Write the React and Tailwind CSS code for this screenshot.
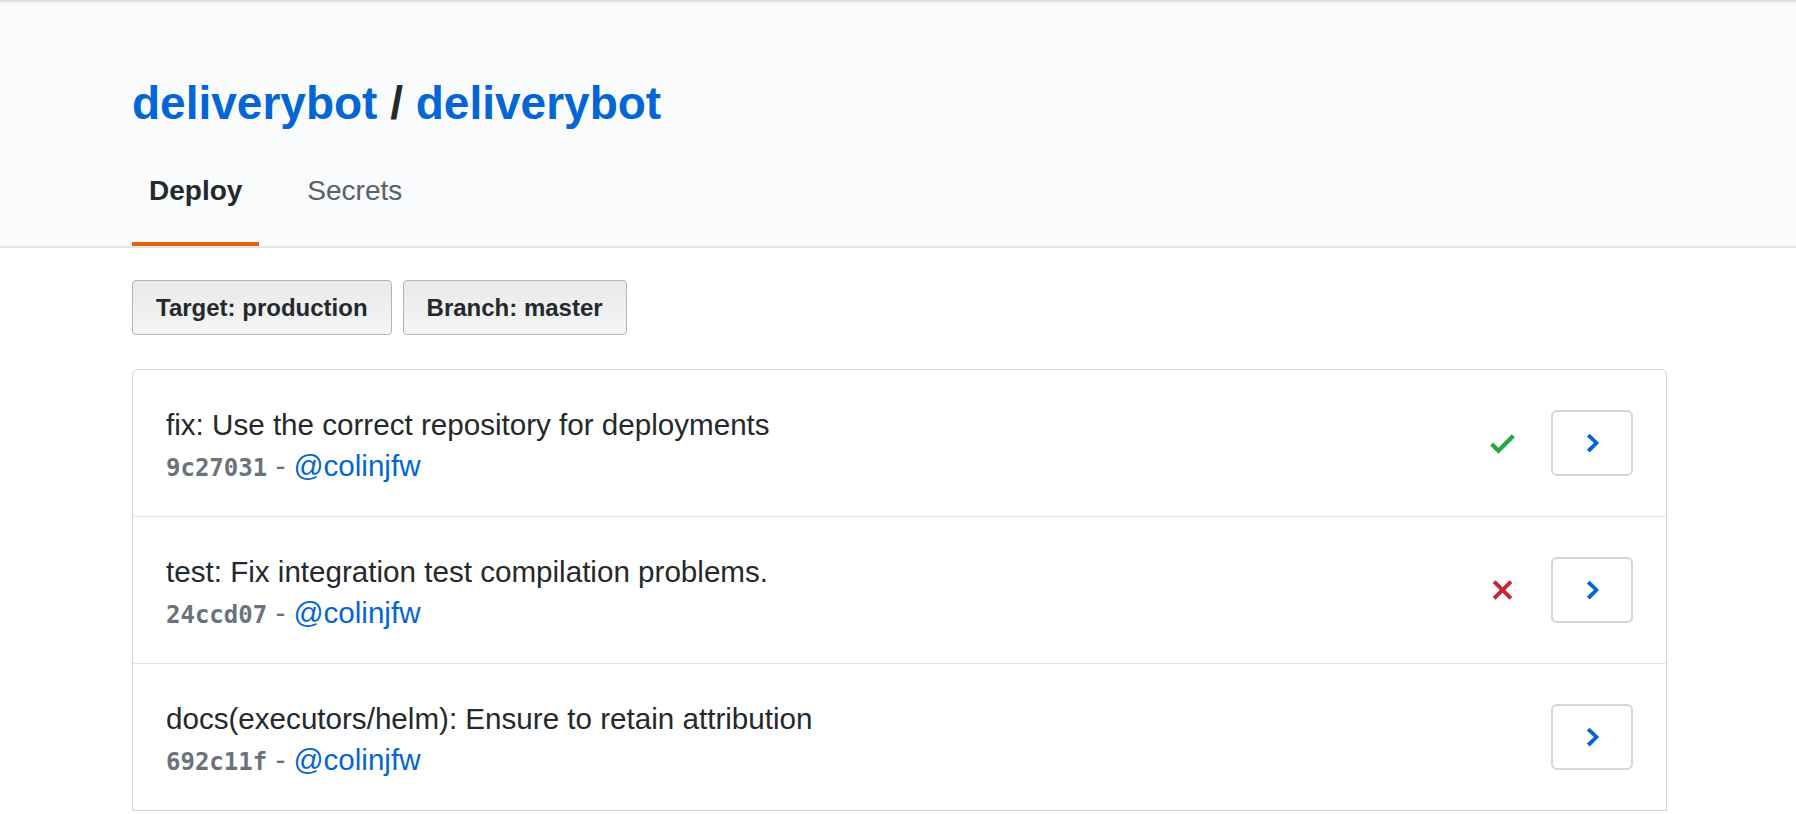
import React from "react";

const sans = { fontFamily: '"Liberation Sans", Arial, sans-serif' };

function Check() {
  return (
    <svg width="25" height="33" viewBox="0 0 12 16" className="fill-[#28a745]">
      <path d="M12 5l-8 8-4-4 1.5-1.5L4 10l6.5-6.5L12 5z" />
    </svg>
  );
}

function Cross() {
  return (
    <svg width="23" height="30" viewBox="0 0 12 16" className="fill-[#cb2431]">
      <path d="M7.48 8l3.75 3.75-1.48 1.48L6 9.48l-3.75 3.75-1.48-1.48L4.52 8 .77 4.25l1.48-1.48L6 6.52l3.75-3.75 1.48 1.48L7.48 8z" />
    </svg>
  );
}

function Chevron() {
  return (
    <svg width="15" height="30" viewBox="0 0 8 16" className="fill-[#0366d6]">
      <path d="M7.5 8l-5 5L1 11.5 4.75 8 1 4.5 2.5 3l5 5z" />
    </svg>
  );
}

const commits = [
  { msg: "fix: Use the correct repository for deployments", sha: "9c27031", status: "ok" },
  { msg: "test: Fix integration test compilation problems.", sha: "24ccd07", status: "fail" },
  { msg: "docs(executors/helm): Ensure to retain attribution", sha: "692c11f", status: null },
];

export default function App() {
  return (
    <div className="min-h-[814px] bg-white" style={sans}>
      <header className="bg-[#fafbfc] border-b-2 border-[#e1e4e8]">
        <div className="h-[3px] bg-gradient-to-b from-[#d9dadd] to-[#f4f5f7]" />
        <div className="ml-[132px] pt-[77px]">
          <h1 className="text-[46px] leading-none font-bold text-[#24292e]">
            <span className="text-[#0366d6]">deliverybot</span> /{" "}
            <span className="text-[#0366d6]">deliverybot</span>
          </h1>
          <nav className="mt-[51px] flex gap-[31px] text-[28px] leading-none">
            <div className="px-[17px] pb-[37px] border-b-4 border-[#e36209] font-bold text-[#24292e]">
              Deploy
            </div>
            <div className="px-[17px] pb-[37px] border-b-4 border-transparent text-[#586069]">
              Secrets
            </div>
          </nav>
        </div>
      </header>

      <main className="ml-[132px] w-[1535px] pt-[32px]">
        <div className="flex gap-[11px]">
          <button className="h-[55px] px-[23px] flex items-center rounded-[4px] border border-[#b4b4b4] bg-gradient-to-b from-[#e9e9e9] to-[#f5f5f5] text-[24px] font-bold text-[#24292e]">
            Target: production
          </button>
          <button className="h-[55px] px-[23px] flex items-center rounded-[4px] border border-[#b4b4b4] bg-gradient-to-b from-[#e9e9e9] to-[#f5f5f5] text-[24px] font-bold text-[#24292e]">
            Branch: master
          </button>
        </div>

        <div className="mt-[34px] rounded-t-[6px] border border-[#d1d5da] bg-white overflow-hidden">
          {commits.map((c, i) => (
            <div
              key={c.sha}
              className={
                "flex items-center pl-[33px] pr-[33px] " +
                (i === 0 ? "h-[146px]" : "h-[147px] border-t border-[#e1e4e8]")
              }
            >
              <div className="flex-1 pt-[7px]">
                <div className="text-[29.6px] leading-[41px] text-[#24292e]">{c.msg}</div>
                <div className="text-[29.6px] leading-[41px] text-[#6a737d]">
                  <span
                    className="font-bold text-[24px]"
                    style={{ fontFamily: '"DejaVu Sans Mono", monospace' }}
                  >
                    {c.sha}
                  </span>{" "}
                  - <span className="text-[#0366d6]">@colinjfw</span>
                </div>
              </div>
              <div className="w-[26px] flex justify-center">
                {c.status === "ok" && <Check />}
                {c.status === "fail" && <Cross />}
              </div>
              <button className="ml-[36px] w-[82px] h-[66px] flex items-center justify-center rounded-[6px] border-2 border-[#d5d5d5] bg-white">
                <Chevron />
              </button>
            </div>
          ))}
        </div>
      </main>
    </div>
  );
}
